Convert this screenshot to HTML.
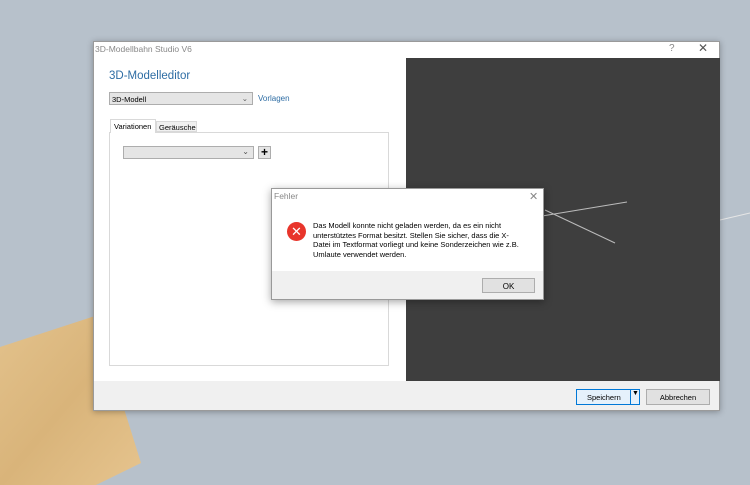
<!DOCTYPE html>
<html><head><style>
body{margin:0;width:750px;height:485px;background:#b7c1cb;position:relative;overflow:hidden;font-family:"Liberation Sans",sans-serif;font-size:8px;color:#000}
.a{position:absolute}
</style></head><body>
<svg class="a" style="left:0;top:0" width="750" height="485">
<defs><linearGradient id="w" x1="0" y1="0" x2="1" y2="1"><stop offset="0" stop-color="#e3c28c"/><stop offset="0.5" stop-color="#d9b47a"/><stop offset="1" stop-color="#e6c48e"/></linearGradient></defs>
<polygon points="0,347 95,316 141,463 96,485 0,485" fill="url(#w)"/>
<line x1="720" y1="220" x2="750" y2="213" stroke="#e6e6e6" stroke-width="1"/>
</svg>
<div class="a" style="left:93px;top:41px;width:627px;height:370px;background:#fff;border:1px solid #9a9a9a;box-sizing:border-box;box-shadow:0 1px 6px rgba(0,0,0,.3)"></div>
<div class="a" style="left:95px;top:44px;color:#888;font-size:8.5px">3D-Modellbahn Studio V6</div>
<div class="a" style="left:669px;top:43px;color:#888;font-size:10px">?</div>
<div class="a" style="left:698px;top:41px;color:#555;font-size:12px">✕</div>
<div class="a" style="left:109px;top:70px;color:#2e6da4;font-size:11.5px">3D-Modelleditor</div>
<div class="a" style="left:109px;top:92px;width:144px;height:13px;background:#e5e5e5;border:1px solid #adadad;box-sizing:border-box;font-size:7.5px;padding:2px 0 0 2px">3D-Modell<span style="position:absolute;right:4px;top:1px;color:#555">⌄</span></div>
<div class="a" style="left:258px;top:94px;color:#2e6da4;font-size:8px">Vorlagen</div>
<div class="a" style="left:109px;top:132px;width:280px;height:234px;border:1px solid #d9d9d9;box-sizing:border-box"></div>
<div class="a" style="left:110px;top:119px;width:46px;height:14px;background:#fff;border:1px solid #d9d9d9;border-bottom:none;box-sizing:border-box;font-size:7.5px;padding:2px 0 0 3px">Variationen</div>
<div class="a" style="left:156px;top:121px;width:41px;height:11px;background:#f0f0f0;border:1px solid #d9d9d9;box-sizing:border-box;font-size:7.5px;padding:1px 0 0 2px">Geräusche</div>
<div class="a" style="left:123px;top:146px;width:131px;height:13px;background:#e5e5e5;border:1px solid #adadad;box-sizing:border-box"><span style="position:absolute;right:4px;top:0;color:#555">⌄</span></div>
<div class="a" style="left:258px;top:146px;width:13px;height:13px;background:#e5e5e5;border:1px solid #adadad;box-sizing:border-box;font-size:12px;font-weight:bold;line-height:11px;text-align:center">+</div>
<div class="a" style="left:406px;top:58px;width:314px;height:323px;background:#3e3e3e"></div>
<svg class="a" style="left:0;top:0" width="750" height="485"><line x1="530" y1="218" x2="627" y2="202" stroke="#bbb"/><line x1="545" y1="210" x2="615" y2="243" stroke="#bbb"/></svg>
<div class="a" style="left:94px;top:381px;width:625px;height:29px;background:#f0f0f0"></div>
<div class="a" style="left:576px;top:389px;width:64px;height:16px;background:#e5f1fb;border:1px solid #0078d7;box-sizing:border-box;font-size:7.5px;padding:3px 0 0 10px">Speichern<span style="position:absolute;left:53px;top:0;height:14px;border-left:1px solid #0078d7;padding-left:1px;font-size:7px">▼</span></div>
<div class="a" style="left:646px;top:389px;width:64px;height:16px;background:#e1e1e1;border:1px solid #adadad;box-sizing:border-box;font-size:7.5px;text-align:center;padding-top:3px">Abbrechen</div>
<div class="a" style="left:271px;top:188px;width:273px;height:112px;background:#fff;border:1px solid #999;box-sizing:border-box;box-shadow:0 2px 8px rgba(0,0,0,.35)"></div>
<div class="a" style="left:272px;top:271px;width:271px;height:28px;background:#f0f0f0"></div>
<div class="a" style="left:274px;top:191px;color:#888;font-size:8.5px">Fehler</div>
<div class="a" style="left:529px;top:190px;color:#888;font-size:11px">✕</div>
<div class="a" style="left:287px;top:222px;width:19px;height:19px;border-radius:50%;background:#e8352b;color:#fff;font-size:13px;line-height:19px;text-align:center">✕</div>
<div class="a" style="left:313px;top:221px;width:212px;font-size:7.5px;line-height:9.5px">Das Modell konnte nicht geladen werden, da es ein nicht unterstütztes Format besitzt. Stellen Sie sicher, dass die X-Datei im Textformat vorliegt und keine Sonderzeichen wie z.B. Umlaute verwendet werden.</div>
<div class="a" style="left:482px;top:278px;width:53px;height:15px;background:#e1e1e1;border:1px solid #adadad;box-sizing:border-box;font-size:8px;text-align:center;padding-top:3px">OK</div>
</body></html>
